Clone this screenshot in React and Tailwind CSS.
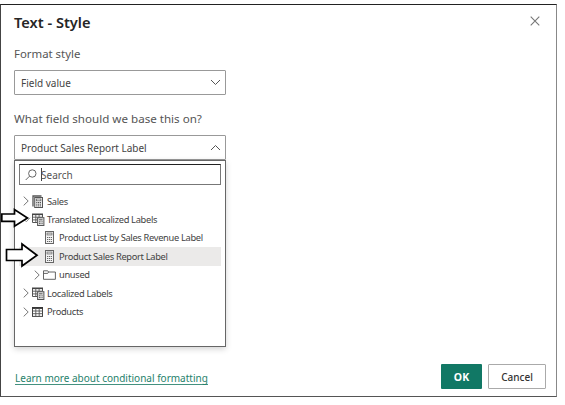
import React from "react";

function Chevron({ dir, className }) {
  const d = { down: "M1 1L5.5 5.5L10 1", up: "M1 6L5.5 1.5L10 6" }[dir];
  return (
    <svg width="11" height="7" viewBox="0 0 11 7" fill="none" stroke="#555" strokeWidth="1" className={className}>
      <path d={d} />
    </svg>
  );
}

function Expander({ open }) {
  if (open) {
    return (
      <svg width="9" height="6" viewBox="0 0 9 6" fill="none" stroke="#888" strokeWidth="0.9" className="-ml-px shrink-0">
        <path d="M0.7 0.8L4.3 4.8L8 0.8" />
      </svg>
    );
  }
  return (
    <svg width="6" height="10" viewBox="0 0 6 10" fill="none" stroke="#666" strokeWidth="0.9" className="shrink-0">
      <path d="M0.7 0.6L5.2 5L0.7 9.4" />
    </svg>
  );
}

function Calc() {
  return (
    <svg width="9" height="13" viewBox="0 0 9 13" fill="none" className="shrink-0">
      <rect x="0.5" y="0.5" width="8" height="12" fill="#f4f4f4" stroke="#666" />
      <rect x="2" y="2" width="5" height="2" fill="#ddd" stroke="#666" strokeWidth="0.7" />
      <path d="M2 6.5H7M2 8.5H7M2 10.5H7" stroke="#666" strokeWidth="1" strokeDasharray="1.2 0.7" />
    </svg>
  );
}

function CalcStack() {
  return (
    <svg width="12" height="13" viewBox="0 0 12 13" fill="none" className="shrink-0">
      <path d="M1 11.5V1H9.5" stroke="#555" strokeWidth="1.3" />
      <rect x="2.7" y="2.5" width="7.8" height="10" fill="#eee" stroke="#555" />
      <rect x="4.3" y="4" width="4.6" height="1.8" fill="#fff" stroke="#555" strokeWidth="0.7" />
      <path d="M4.2 7.5H9M4.2 9.2H9M4.2 10.9H9" stroke="#555" strokeWidth="1" strokeDasharray="1.2 0.6" />
    </svg>
  );
}

function TableCalc() {
  return (
    <svg width="13" height="13" viewBox="0 0 13 13" fill="none" className="shrink-0">
      <path d="M0.5 1V9.5H5M10.5 1V4" stroke="#555" />
      <path d="M0 1.3H11" stroke="#444" strokeWidth="1.6" />
      <path d="M0.5 4.2H10.5M0.5 6.9H5M3.8 1.5V9.5M7.1 1.5V4.5" stroke="#555" strokeWidth="0.9" />
      <rect x="5.6" y="4.7" width="6.3" height="7.8" fill="#e4e4e4" stroke="#555" />
      <path d="M7 6.8H10.5" stroke="#555" />
      <path d="M7 8.8H10.6M7 10.6H10.6" stroke="#555" strokeWidth="1" strokeDasharray="1 0.5" />
    </svg>
  );
}

function Table() {
  return (
    <svg width="11" height="10" viewBox="0 0 11 10" fill="none" className="shrink-0">
      <rect x="0.5" y="0.7" width="10" height="8.7" stroke="#444" />
      <path d="M0 1H11" stroke="#333" strokeWidth="1.8" />
      <path d="M0.5 4H10.5M0.5 6.7H10.5M3.8 1V9.4M7.2 1V9.4" stroke="#555" strokeWidth="0.9" />
    </svg>
  );
}

function Folder() {
  return (
    <svg width="13" height="10" viewBox="0 0 13 10" fill="none" className="shrink-0">
      <path d="M0.5 0.8H4.7L5.6 2H12.4V9.3H0.5ZM0.5 3.4H4.7L5.6 2" stroke="#555" strokeWidth="0.9" />
    </svg>
  );
}

function Row({ icon, label, expandable, open, nested, selected }) {
  return (
    <div className={`flex h-[18.4px] items-center ${nested ? "pl-[15px]" : "pl-1"} ${selected ? "bg-[#ebeae9]" : ""}`}>
      <div className="flex w-[9px] shrink-0">{expandable && <Expander open={open} />}</div>
      <div className={`flex shrink-0 items-center ${nested ? (expandable ? "w-[16px]" : "w-[16px] pl-[2px]") : "w-[15px]"}`}>{icon}</div>
      <span className="whitespace-nowrap text-[9.3px] leading-none tracking-[-0.32px] text-[#424242]">{label}</span>
    </div>
  );
}

export default function App() {
  return (
    <div className="relative h-[405px] w-[565px] overflow-hidden bg-white pt-1 font-['Noto_Sans','Open_Sans',sans-serif]">
      <main className="flex h-[393px] w-[557px] flex-col border border-t-[#222] border-r-[#888] border-b-[#555] border-l-[#444] pl-[13px]">
        <header className="flex h-[35px] items-center justify-between pr-[16px]">
          <h1 className="text-[14.6px] font-semibold leading-none text-[#252525]">Text - Style</h1>
          <svg width="10" height="10" viewBox="0 0 10 10" stroke="#777" strokeWidth="1.1" className="mb-[3px]">
            <path d="M0.7 0.7L9.3 9.3M9.3 0.7L0.7 9.3" />
          </svg>
        </header>
        <label className="flex h-[28px] items-center text-[11.4px] leading-none text-[#555]">Format style</label>
        <div className="mt-[2px] flex h-[25px] w-[212px] items-center justify-between rounded-[1px] border border-[#999] pr-[4px] pl-[6px]">
          <span className="text-[10px] leading-none text-[#444]">Field value</span>
          <Chevron dir="down" />
        </div>
        <label className="mt-[10px] flex h-[28px] items-center text-[11.6px] leading-none text-[#555]">What field should we base this on?</label>
        <div className="mt-[2px] flex h-[25px] w-[212px] items-center justify-between rounded-[1px] border border-[#999] pr-[4px] pl-[6px]">
          <span className="text-[10px] leading-none text-[#444]">Product Sales Report Label</span>
          <Chevron dir="up" />
        </div>
        <section className="h-[187px] w-[212px] border border-[#666] bg-white px-1 pt-[3px] shadow-[0_2px_6px_rgba(0,0,0,0.18)]">
          <div className="flex h-[21px] items-center border border-[#777] border-t-[#222] pl-[5px]">
            <svg width="12" height="12" viewBox="0 0 12 12" fill="none" stroke="#555" strokeWidth="0.9">
              <circle cx="7.3" cy="4.5" r="3.7" />
              <path d="M4.5 7.2L0.7 11" />
            </svg>
            <span className="ml-[4px] h-[13px] w-px bg-[#444]" />
            <span className="-ml-px text-[10px] leading-none text-[#555]">Search</span>
          </div>
          <div className="mt-[7px]">
            <Row expandable icon={<CalcStack />} label="Sales" />
            <Row expandable open icon={<TableCalc />} label="Translated Localized Labels" />
            <Row nested icon={<Calc />} label="Product List by Sales Revenue Label" />
            <Row nested selected icon={<Calc />} label="Product Sales Report Label" />
            <Row nested expandable icon={<Folder />} label="unused" />
            <Row expandable icon={<TableCalc />} label="Localized Labels" />
            <Row expandable icon={<Table />} label="Products" />
          </div>
        </section>
        <footer className="mt-[17px] flex h-[25px] items-center pr-[10px]">
          <a className="ml-px border-b border-[#43917f] pt-[5px] text-[10px] leading-[11px] text-[#267f6b]">Learn more about conditional formatting</a>
          <button className="ml-auto h-[25px] w-[41px] rounded-[1px] bg-[#117865] pt-px text-[10.5px] font-bold leading-none text-white">OK</button>
          <button className="ml-[6px] h-[25px] w-[58px] rounded-[1px] border border-[#aaa] pt-px text-[10px] font-medium leading-none text-[#333]">Cancel</button>
        </footer>
      </main>
      <svg width="40" height="62" viewBox="0 207 40 62" className="pointer-events-none absolute top-[207px] left-0" fill="#fff" stroke="#000" strokeWidth="1.7">
        <path d="M1.8 214H14.5V209.5L27.5 218L14.5 226.3V221.3H1.8Z" />
        <path d="M6.5 249.5H22V244L37 255.2L22 266V260.5H6.5Z" />
      </svg>
    </div>
  );
}
